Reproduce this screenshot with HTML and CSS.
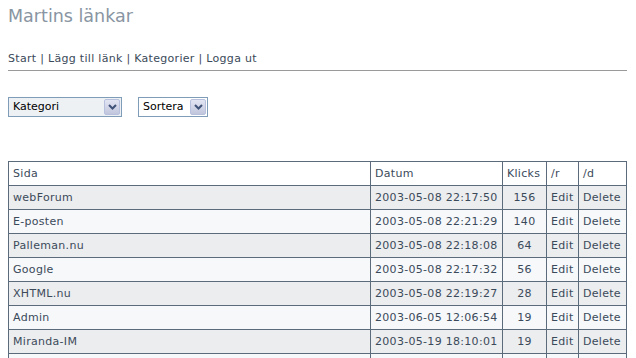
FILE: index.html
```html
<!DOCTYPE html>
<html lang="sv">

<head>
  <meta charset="UTF-8" />
  <title>Martins länkar</title>
  <link rel="stylesheet" href="styles.css">
</head>

<body>
  <h1 class="title">Martins länkar</h1>

  <p class="nav">
    <a href="#">Start</a> | <a href="#">Lägg till länk</a> | <a href="#">Kategorier</a> | <a href="#">Logga ut</a>
  </p>
  <hr class="rule" />

  <div class="filters">
    <div class="drop drop-cat">
      <span class="drop-value">Kategori</span>
      <span class="drop-btn">
        <svg width="9" height="6" viewBox="0 0 9 6"><path d="M1 1 L4.5 4.5 L8 1" fill="none" stroke="#3f5278" stroke-width="2" /></svg>
      </span>
    </div>
    <div class="drop drop-sort">
      <span class="drop-value">Sortera</span>
      <span class="drop-btn">
        <svg width="9" height="6" viewBox="0 0 9 6"><path d="M1 1 L4.5 4.5 L8 1" fill="none" stroke="#3f5278" stroke-width="2" /></svg>
      </span>
    </div>
  </div>

  <table class="links">
    <colgroup>
      <col />
      <col class="c-date" />
      <col class="c-klicks" />
      <col class="c-r" />
      <col class="c-d" />
    </colgroup>
    <tr class="head">
      <td>Sida</td>
      <td>Datum</td>
      <td>Klicks</td>
      <td>/r</td>
      <td>/d</td>
    </tr>
    <tr>
      <td><a href="#">webForum</a></td>
      <td>2003-05-08 22:17:50</td>
      <td class="num">156</td>
      <td><a href="#">Edit</a></td>
      <td><a href="#">Delete</a></td>
    </tr>
    <tr>
      <td><a href="#">E-posten</a></td>
      <td>2003-05-08 22:21:29</td>
      <td class="num">140</td>
      <td><a href="#">Edit</a></td>
      <td><a href="#">Delete</a></td>
    </tr>
    <tr>
      <td><a href="#">Palleman.nu</a></td>
      <td>2003-05-08 22:18:08</td>
      <td class="num">64</td>
      <td><a href="#">Edit</a></td>
      <td><a href="#">Delete</a></td>
    </tr>
    <tr>
      <td><a href="#">Google</a></td>
      <td>2003-05-08 22:17:32</td>
      <td class="num">56</td>
      <td><a href="#">Edit</a></td>
      <td><a href="#">Delete</a></td>
    </tr>
    <tr>
      <td><a href="#">XHTML.nu</a></td>
      <td>2003-05-08 22:19:27</td>
      <td class="num">28</td>
      <td><a href="#">Edit</a></td>
      <td><a href="#">Delete</a></td>
    </tr>
    <tr>
      <td><a href="#">Admin</a></td>
      <td>2003-06-05 12:06:54</td>
      <td class="num">19</td>
      <td><a href="#">Edit</a></td>
      <td><a href="#">Delete</a></td>
    </tr>
    <tr>
      <td><a href="#">Miranda-IM</a></td>
      <td>2003-05-19 18:10:01</td>
      <td class="num">19</td>
      <td><a href="#">Edit</a></td>
      <td><a href="#">Delete</a></td>
    </tr>
    <tr class="more">
      <td></td>
      <td></td>
      <td></td>
      <td></td>
      <td></td>
    </tr>
  </table>
</body>

</html>
```

FILE: styles.css
```css
body {
  margin: 8px;
  background: #fff;
  color: #3b4a5a;
  font-family: "DejaVu Sans", Verdana, sans-serif;
  font-size: 11px;
  letter-spacing: 0.3px;
}

a {
  color: #3b4a5a;
  text-decoration: none;
}

.title {
  margin: 0;
  font-size: 17.5px;
  line-height: 16px;
  font-weight: normal;
  letter-spacing: 0;
  color: #8995a2;
}

.nav {
  margin: 28px 0 0;
  line-height: 14px;
}

.rule {
  margin: 4px 0 0;
  width: 619px;
  height: 0;
  border: none;
  border-top: 1px solid #9a9a9a;
}

.filters {
  margin-top: 26px;
  display: flex;
  gap: 16px;
}

.drop {
  height: 18px;
  display: flex;
  align-items: stretch;
  border: 1px solid #7f9db9;
  background: #fff;
  color: #000;
  letter-spacing: 0;
}

.drop-cat {
  width: 112px;
  background: #eef1f4;
}

.drop-sort {
  width: 68px;
}

.drop-value {
  flex: 1;
  padding-left: 4px;
  line-height: 18px;
}

.drop-btn {
  width: 16px;
  margin: 1px;
  display: flex;
  align-items: center;
  justify-content: center;
  border: 1px solid #b7c1de;
  border-radius: 2px;
  background: linear-gradient(#e2e5f2, #c1c6dd);
  box-sizing: border-box;
}

.links {
  margin-top: 44px;
  width: 619px;
  table-layout: fixed;
  border-collapse: collapse;
}

.links td {
  height: 23px;
  padding: 0 4px;
  line-height: 23px;
  border: 1px solid #5b6b7b;
  white-space: nowrap;
  overflow: hidden;
}

.links .num {
  text-align: center;
}

.c-date {
  width: 132px;
}

.c-klicks {
  width: 44px;
}

.c-r {
  width: 32px;
}

.c-d {
  width: 48px;
}

.links tr {
  background: #f6f8fa;
}

.links tr:nth-child(even) {
  background: #ecedef;
}

.links tr.head {
  background: #fff;
}
```
